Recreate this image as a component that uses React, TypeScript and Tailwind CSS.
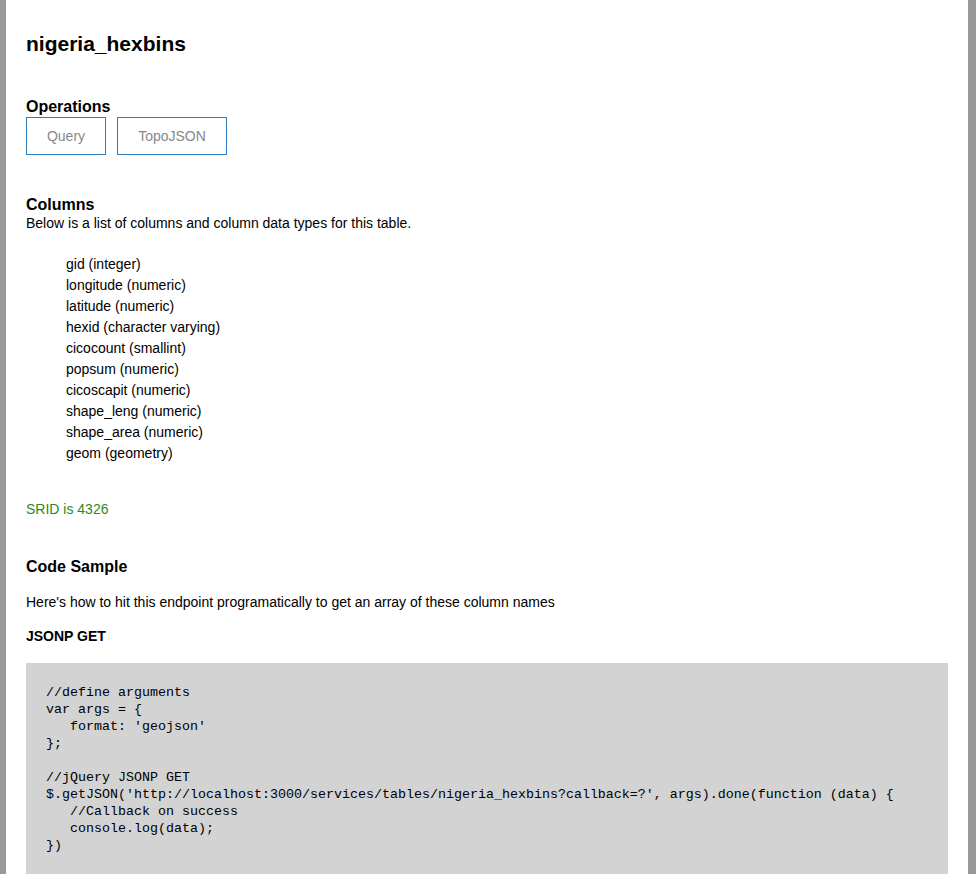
const columns = [
  "gid (integer)",
  "longitude (numeric)",
  "latitude (numeric)",
  "hexid (character varying)",
  "cicocount (smallint)",
  "popsum (numeric)",
  "cicoscapit (numeric)",
  "shape_leng (numeric)",
  "shape_area (numeric)",
  "geom (geometry)",
];

const code = `//define arguments
var args = {
   format: 'geojson'
};

//jQuery JSONP GET
$.getJSON('http://localhost:3000/services/tables/nigeria_hexbins?callback=?', args).done(function (data) {
   //Callback on success
   console.log(data);
})`;

export default function App() {
  return (
    <div className="min-h-screen bg-[#999999] px-[6px] pr-[8px] font-['Liberation_Sans',Arial,sans-serif] text-black">
      <div className="min-h-screen bg-white px-[20px] pt-[20px] pb-[20px]">
        <h1 className="mt-[12px] text-[21px] leading-[24px] font-bold">nigeria_hexbins</h1>

        <h2 className="mt-[42px] text-[16px] leading-[18px] font-bold">Operations</h2>
        <div className="mt-[1px] flex gap-[11px]">
          <button className="h-[38px] w-[80px] border border-[#2a7bbf] text-[14px] text-[#888888]">
            Query
          </button>
          <button className="h-[38px] w-[110px] border border-[#2a7bbf] text-[14px] text-[#888888]">
            TopoJSON
          </button>
        </div>

        <h2 className="mt-[41px] text-[16px] leading-[18px] font-bold">Columns</h2>
        <p className="text-[14px] leading-[18px]">
          Below is a list of columns and column data types for this table.
        </p>
        <ul className="mt-[22px] pl-[40px] text-[14px] leading-[21px]">
          {columns.map((c) => (
            <li key={c}>{c}</li>
          ))}
        </ul>

        <p className="mt-[35px] text-[14px] leading-[20px] text-[#2a8a1c]">SRID is 4326</p>

        <h2 className="mt-[39px] text-[16px] leading-[18px] font-bold">Code Sample</h2>
        <p className="mt-[16px] text-[14px] leading-[20px]">
          Here's how to hit this endpoint programatically to get an array of these column names
        </p>
        <h3 className="mt-[14px] text-[14px] leading-[20px] font-bold">JSONP GET</h3>

        <pre className="mt-[17px] bg-[#d3d3d3] px-[20px] pt-[21px] pb-[20px] font-['Liberation_Mono','Courier_New',monospace] text-[13.33px] leading-[17px] text-black">
          {code}
        </pre>
      </div>
    </div>
  );
}
